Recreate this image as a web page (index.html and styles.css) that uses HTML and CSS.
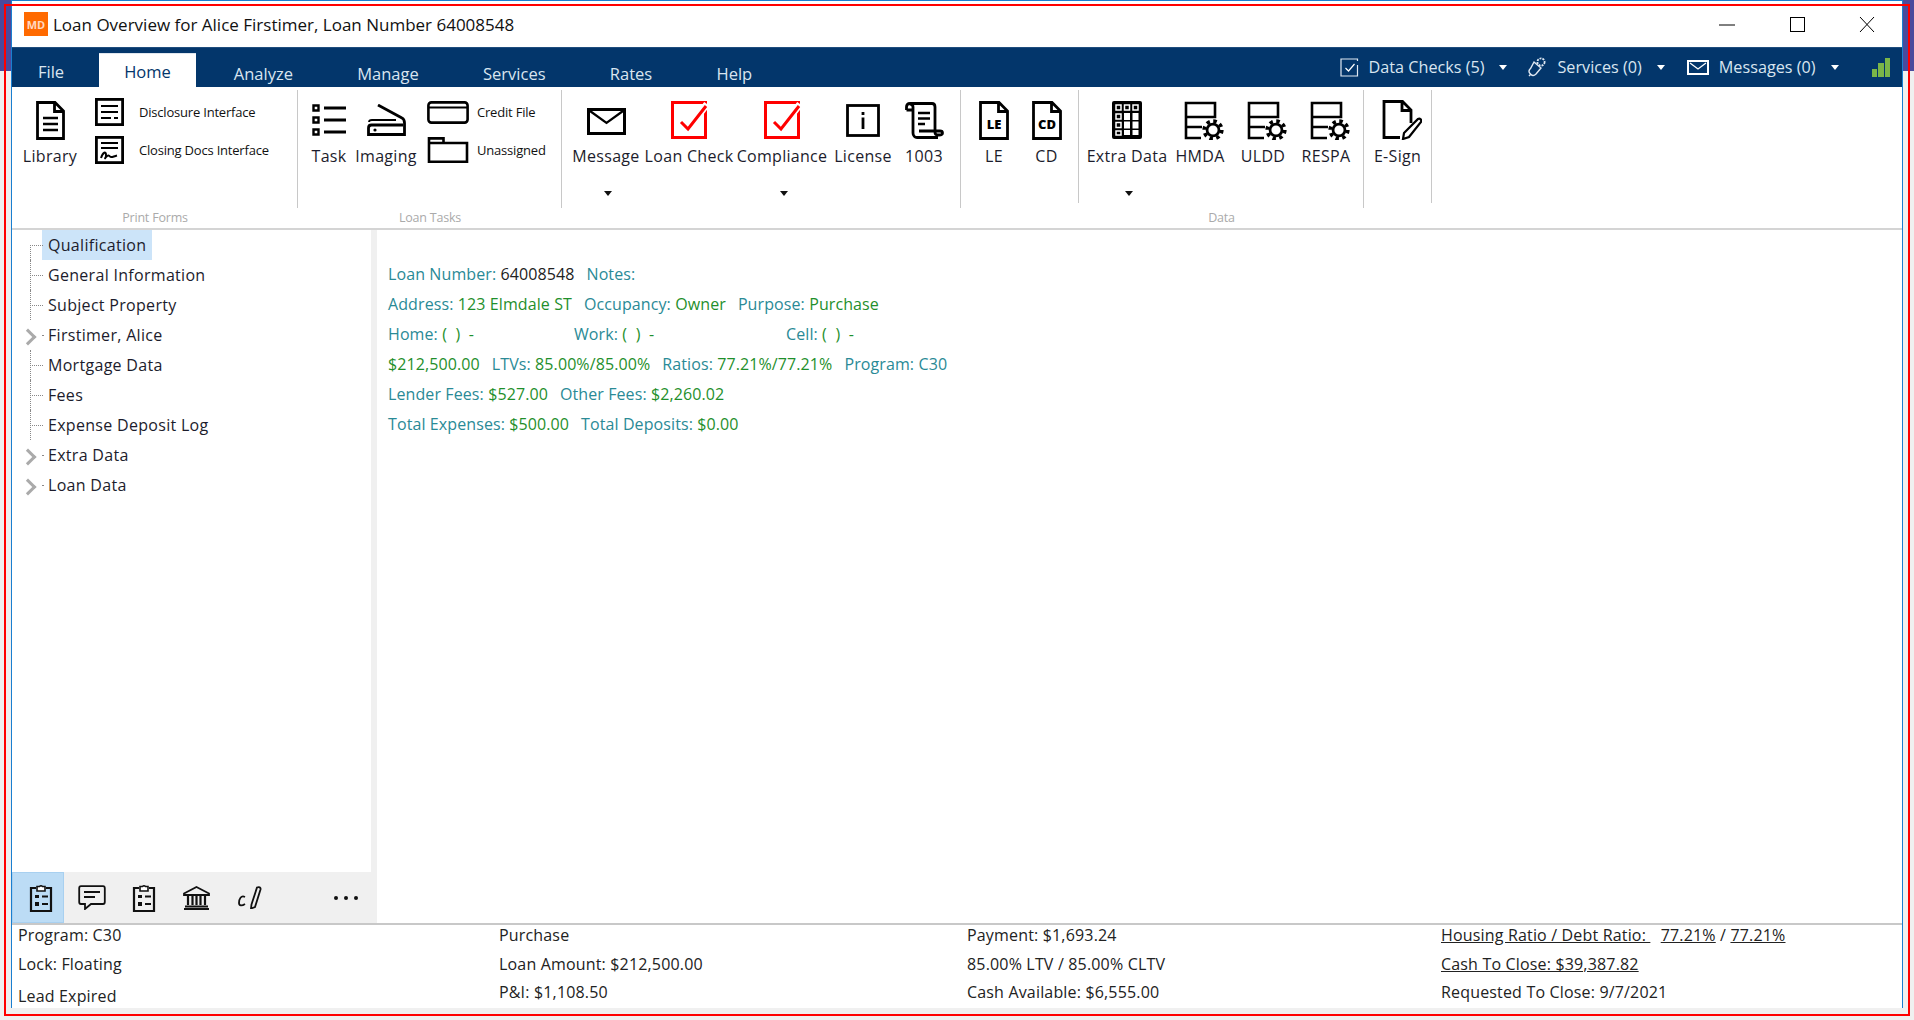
FILE: index.html
```html
<!DOCTYPE html>
<html lang="en">
<head>
  <meta charset="UTF-8">
  <title>Loan Overview</title>
  <link rel="stylesheet" href="styles.css">
</head>
<body>
  <svg class="defs" width="0" height="0">
    <symbol id="gear" viewBox="0 0 24 24">
      <circle cx="12" cy="12" r="6.5" fill="#fff" stroke="#000" stroke-width="3"/>
      <circle cx="12" cy="12" r="9.6" fill="none" stroke="#000" stroke-width="4" stroke-dasharray="3.8 3.74"/>
    </symbol>
    <symbol id="form-gear" viewBox="0 0 47 39">
      <path d="M9 2H38V16H9ZM9 16V37H24M9 26H25" fill="none" stroke="#000" stroke-width="2.6"/>
      <use href="#gear" x="25" y="18" width="22" height="22"/>
    </symbol>
    <symbol id="red-check" viewBox="0 0 37 38">
      <rect x="1.5" y="1.5" width="33" height="35" fill="none" stroke="#f00" stroke-width="3"/>
      <path d="M10 21l7 7L36 3" fill="none" stroke="#fff" stroke-width="7"/>
      <path d="M10 21l7 7L35 5" fill="none" stroke="#f00" stroke-width="3"/>
    </symbol>
    <symbol id="clip" viewBox="0 0 24 28">
      <path d="M7 4H2v23h20V4h-5" fill="none" stroke="#111" stroke-width="2.2"/>
      <path d="M8 5V2.5h2.5a2 2 0 0 1 3 0H16V5v2H8z" fill="#fff" stroke="#111" stroke-width="1.6"/>
      <path d="M6 11h4v3H6zM6 18h4v4H6z" fill="#111"/>
      <path d="M13 12.5h6M13 20h6M6 15.5h0" stroke="#111" stroke-width="1.8"/>
    </symbol>
  </svg>

  <div class="side-strip left"></div>
  <div class="side-strip right"></div>

  <div class="window">
    <header class="titlebar">
      <div class="logo">MD</div>
      <div class="title">Loan Overview for Alice Firstimer, Loan Number 64008548</div>
      <div class="winbtns">
        <svg width="16" height="15" viewBox="0 0 16 15"><path d="M0 8h16" stroke="#000"/></svg>
        <svg width="16" height="15" viewBox="0 0 16 15"><rect x="1.5" y=".5" width="14" height="14" fill="none" stroke="#000"/></svg>
        <svg width="16" height="15" viewBox="0 0 16 15"><path d="M1 0l14 15M15 0L1 15" stroke="#000" fill="none"/></svg>
      </div>
    </header>

    <nav class="tabbar">
      <div class="tab tab-file">File</div>
      <div class="tab tab-active">Home</div>
      <div class="tab">Analyze</div>
      <div class="tab">Manage</div>
      <div class="tab">Services</div>
      <div class="tab">Rates</div>
      <div class="tab">Help</div>
      <div class="tools">
        <div class="tool tool-checks">
          <svg width="19" height="19" viewBox="0 0 19 19"><path d="M17.5 7v11H1V1h16.5v2" fill="none" stroke="#dfe8f2" stroke-width="1.2"/><path d="M5.5 10l3 3 6-7" fill="none" stroke="#fff" stroke-width="1.2"/></svg>
          <span class="tool-text">Data Checks (5)</span><i class="caret caret-w"></i>
        </div>
        <div class="tool">
          <svg width="21" height="21" viewBox="0 0 21 21"><path d="M8 5l7 6-5 6c-2 2-4 1.500-5 .5l-1-1c-1-1-1.500-3 .5-5z" fill="none" stroke="#dfe8f2" stroke-width="1.4"/><path d="M3 19l2-2" stroke="#dfe8f2" stroke-width="1.400"/><circle cx="15" cy="5" r="3.600" fill="none" stroke="#dfe8f2" stroke-width="1.800" stroke-dasharray="2 1"/></svg>
          <span class="tool-text">Services (0)</span><i class="caret caret-w"></i>
        </div>
        <div class="tool">
          <svg width="22" height="15" viewBox="0 0 22 15"><rect x="1" y="1" width="20" height="13" fill="none" stroke="#fff" stroke-width="2"/><path d="M3 3l8 6 8-6" fill="none" stroke="#fff" stroke-width="1.300"/></svg>
          <span class="tool-text">Messages (0)</span><i class="caret caret-w"></i>
        </div>
        <div class="signal"><i class="bar1"></i><i class="bar2"></i><i class="bar3"></i></div>
      </div>
    </nav>

    <section class="ribbon">
      <div class="group g1">
        <div class="group-body">
          <div class="rb">
            <div class="rb-icon"><svg width="29" height="39" viewBox="0 0 29 39"><path d="M1.500 1.500H19L27.500 10V37.500H1.500ZM18.500 2v8.500H27" fill="none" stroke="#000" stroke-width="2.800"/><path d="M7 17h15M7 23h15M7 29h15" stroke="#000" stroke-width="2.600"/></svg></div>
            <div class="rb-label">Library</div>
          </div>
          <div class="small-col col-print">
            <div class="small-btn">
              <svg width="29" height="28" viewBox="0 0 29 28"><rect x="1.400" y="1.400" width="26.200" height="25.200" fill="none" stroke="#000" stroke-width="2.800"/><path d="M6 8h17M6 14h17M6 20h10M19 20h4" stroke="#000" stroke-width="2"/></svg>
              <span>Disclosure Interface</span>
            </div>
            <div class="small-btn">
              <svg width="29" height="28" viewBox="0 0 29 28"><rect x="1.400" y="1.400" width="26.200" height="25.200" fill="none" stroke="#000" stroke-width="2.800"/><path d="M6 7h17M6 12h17" stroke="#000" stroke-width="2.200"/><path d="M6 22c2-6 5-7 5-3s-2 4 0 2 3-2 4-.500 3 0 7-1" fill="none" stroke="#000" stroke-width="2"/></svg>
              <span>Closing Docs Interface</span>
            </div>
          </div>
        </div>
        <div class="group-label">Print Forms</div>
      </div>

      <div class="group g2">
        <div class="group-body">
          <div class="rb">
            <div class="rb-icon"><svg width="34" height="32" viewBox="0 0 34 32"><path d="M1.500 1.500h5v5h-5zM1.500 13.500h5v5h-5zM1.500 25.500h5v5h-5z" fill="none" stroke="#000" stroke-width="2.400"/><path d="M12 4h22M12 16h22M12 28h22" stroke="#000" stroke-width="2.800"/></svg></div>
            <div class="rb-label">Task</div>
          </div>
          <div class="rb">
            <div class="rb-icon"><svg width="39" height="32" viewBox="0 0 39 32"><path d="M11 1l24 13c2 1 2.500 3 2.500 5v11.500H1.500V24c0-2 1-3 3-3H36M1.500 21" fill="none" stroke="#000" stroke-width="2.800"/><path d="M2 18c0-1 1-2 3-2h24" fill="none" stroke="#000" stroke-width="1.800"/><circle cx="8" cy="26" r="1.600"/></svg></div>
            <div class="rb-label">Imaging</div>
          </div>
          <div class="small-col col-tasks">
            <div class="small-btn">
              <svg width="42" height="23" viewBox="0 0 42 23"><rect x="1.400" y="1.400" width="39.200" height="20.200" rx="3" fill="none" stroke="#000" stroke-width="2.600"/><path d="M1 6.500h40" stroke="#000" stroke-width="1.800"/></svg>
              <span>Credit File</span>
            </div>
            <div class="small-btn">
              <svg width="42" height="26" viewBox="0 0 42 26"><path d="M2 1.400h14.500V6H40V24.800H2ZM2 6h14" fill="none" stroke="#000" stroke-width="2.600"/></svg>
              <span>Unassigned</span>
            </div>
          </div>
        </div>
        <div class="group-label">Loan Tasks</div>
      </div>

      <div class="group g3">
        <div class="group-body">
          <div class="rb">
            <div class="rb-icon icon-low"><svg width="39" height="27" viewBox="0 0 39 27"><rect x="1.500" y="1.500" width="36" height="24" fill="none" stroke="#000" stroke-width="3"/><path d="M3 3l16.500 12L36 3" fill="none" stroke="#000" stroke-width="2.200"/></svg></div>
            <div class="rb-label">Message</div>
            <i class="caret"></i>
          </div>
          <div class="rb">
            <div class="rb-icon"><svg width="37" height="38"><use href="#red-check"/></svg></div>
            <div class="rb-label">Loan Check</div>
          </div>
          <div class="rb">
            <div class="rb-icon"><svg width="37" height="38"><use href="#red-check"/></svg></div>
            <div class="rb-label">Compliance</div>
            <i class="caret"></i>
          </div>
          <div class="rb">
            <div class="rb-icon"><svg width="34" height="33" viewBox="0 0 34 33"><rect x="1.500" y="1.500" width="31" height="30" fill="none" stroke="#000" stroke-width="2.800"/><path d="M17 8v3M17 13.500V25" stroke="#000" stroke-width="2.800"/></svg></div>
            <div class="rb-label">License</div>
          </div>
          <div class="rb">
            <div class="rb-icon"><svg width="39" height="37" viewBox="0 0 39 37"><path d="M1.500 8V5c0-2 1-3.500 3.500-3.500h22c2 0 3 1.500 3 3.500v25c0 2 1 3 2.500 3H34c2 0 3.500-.500 3.500-2s-1-2-2.500-2H14M1.500 8H8V5M5 2c2 0 3 1 3 3V31c0 3 2 4.500 4 4.500H33" fill="none" stroke="#000" stroke-width="2.800"/><path d="M13 11h12M13 16.500h12M13 22h7" stroke="#000" stroke-width="2.400"/></svg></div>
            <div class="rb-label">1003</div>
          </div>
        </div>
        <div class="group-label"></div>
      </div>

      <div class="group g4">
        <div class="group-body short">
          <div class="rb">
            <div class="rb-icon"><svg width="30" height="39" viewBox="0 0 30 39"><path d="M1.500 1.500H20L28.500 10V37.500H1.500ZM19.500 2v8.500H28" fill="none" stroke="#000" stroke-width="2.800"/><text x="15" y="28" class="doc-text">LE</text></svg></div>
            <div class="rb-label">LE</div>
          </div>
          <div class="rb">
            <div class="rb-icon"><svg width="30" height="39" viewBox="0 0 30 39"><path d="M1.500 1.500H20L28.500 10V37.500H1.500ZM19.500 2v8.500H28" fill="none" stroke="#000" stroke-width="2.800"/><text x="15" y="28" class="doc-text">CD</text></svg></div>
            <div class="rb-label">CD</div>
          </div>
        </div>
      </div>

      <div class="group g5">
        <div class="group-body">
          <div class="rb">
            <div class="rb-icon"><svg width="30" height="38" viewBox="0 0 30 38"><rect width="30" height="38" rx="2"/><path d="M4 4h5v5H4zM12.500 4h5v5h-5zM21 4h5v5h-5zM4 13h5v5H4zM4 21.500h5v5H4zM4 30h5v4H4z" fill="none" stroke="#fff" stroke-width="1.500"/><path d="M12 12h6v7h-6zM20.500 12h6v7h-6zM12 20.500h6v7h-6zM20.500 20.500h6v7h-6zM12 29h6v5h-6zM20.500 29h6v5h-6z" fill="#fff"/></svg></div>
            <div class="rb-label">Extra Data</div>
            <i class="caret"></i>
          </div>
          <div class="rb">
            <div class="rb-icon"><svg width="47" height="39" class="svg-over"><use href="#form-gear"/></svg></div>
            <div class="rb-label">HMDA</div>
          </div>
          <div class="rb">
            <div class="rb-icon"><svg width="47" height="39" class="svg-over"><use href="#form-gear"/></svg></div>
            <div class="rb-label">ULDD</div>
          </div>
          <div class="rb">
            <div class="rb-icon"><svg width="47" height="39" class="svg-over"><use href="#form-gear"/></svg></div>
            <div class="rb-label">RESPA</div>
          </div>
        </div>
        <div class="group-label">Data</div>
      </div>

      <div class="group g6">
        <div class="group-body short">
          <div class="rb">
            <div class="rb-icon icon-right"><svg width="40" height="40" viewBox="0 0 40 40"><path d="M29 23V10L20.500 1.500H2v36h16M20 2v8.500h9" fill="none" stroke="#000" stroke-width="2.800"/><path d="M36 19c2-1 4 1 3 3L27 37l-6 2 1-6z" fill="none" stroke="#000" stroke-width="2.200"/></svg></div>
            <div class="rb-label">E-Sign</div>
          </div>
        </div>
      </div>
    </section>

    <main class="main">
      <aside class="sidebar">
        <ul class="tree">
          <li class="node first"><span class="branch"></span><span class="node-text selected">Qualification</span></li>
          <li class="node"><span class="branch"></span><span class="node-text">General Information</span></li>
          <li class="node"><span class="branch"></span><span class="node-text">Subject Property</span></li>
          <li class="node"><span class="chev"></span><span class="node-text">Firstimer, Alice</span></li>
          <li class="node"><span class="branch"></span><span class="node-text">Mortgage Data</span></li>
          <li class="node"><span class="branch"></span><span class="node-text">Fees</span></li>
          <li class="node"><span class="branch"></span><span class="node-text">Expense Deposit Log</span></li>
          <li class="node"><span class="chev"></span><span class="node-text">Extra Data</span></li>
          <li class="node"><span class="chev"></span><span class="node-text">Loan Data</span></li>
        </ul>
        <div class="iconbar">
          <div class="ib active"><svg width="24" height="28"><use href="#clip"/></svg></div>
          <div class="ib ib-chat">
            <svg width="28" height="25" viewBox="0 0 28 25"><path d="M3 1.200h22c1 0 1.800 1 1.800 2V17c0 1-.800 2-1.800 2H13l-6 5v-5H3c-1 0-1.800-1-1.800-2V3.200c0-1 .800-2 1.800-2z" fill="none" stroke="#111" stroke-width="1.800"/><path d="M6 7h16M6 12h11" stroke="#111" stroke-width="1.800"/></svg>
          </div>
          <div class="ib"><svg width="24" height="28"><use href="#clip"/></svg></div>
          <div class="ib">
            <svg width="27" height="24" viewBox="0 0 27 24"><path d="M13.500 1L26 7.500V9H1V7.500z" fill="none" stroke="#111" stroke-width="1.800"/><path d="M5 10v9M9.500 10v9M13.500 10v9M17.500 10v9M22 10v9" stroke="#111" stroke-width="2.200"/><path d="M2 20.500h23M1 23h25" stroke="#111" stroke-width="1.800"/></svg>
          </div>
          <div class="ib ib-sign">
            <svg width="25" height="23" viewBox="0 0 25 23"><path d="M7 11C3 9 1 13 1 17c0 3 3 3 6 1" fill="none" stroke="#111" stroke-width="1.800"/><path d="M19 1.500c2-1 4 0 3.500 2L17 21l-4 1.500.500-4z" fill="none" stroke="#111" stroke-width="1.800"/></svg>
          </div>
          <div class="more"><i></i><i></i><i></i></div>
        </div>
      </aside>

      <div class="overview">
        <div class="ov-line"><span class="lb">Loan Number:</span> <span class="num">64008548</span><span class="lb pair">Notes:</span></div>
        <div class="ov-line"><span class="lb">Address:</span> <span class="val">123 Elmdale ST</span><span class="lb pair">Occupancy:</span> <span class="val">Owner</span><span class="lb pair">Purpose:</span> <span class="val">Purchase</span></div>
        <div class="ov-line"><span class="phone ph-home"><span class="lb">Home:</span> <span class="val">(&nbsp; )&nbsp; -</span></span><span class="phone ph-work"><span class="lb">Work:</span> <span class="val">(&nbsp; )&nbsp; -</span></span><span class="phone"><span class="lb">Cell:</span> <span class="val">(&nbsp; )&nbsp; -</span></span></div>
        <div class="ov-line"><span class="val">$212,500.00</span><span class="lb pair">LTVs:</span> <span class="val">85.00%/85.00%</span><span class="lb pair">Ratios:</span> <span class="val">77.21%/77.21%</span><span class="lb pair">Program:</span> <span class="lb">C30</span></div>
        <div class="ov-line"><span class="lb">Lender Fees:</span> <span class="val">$527.00</span><span class="lb pair">Other Fees:</span> <span class="val">$2,260.02</span></div>
        <div class="ov-line"><span class="lb">Total Expenses:</span> <span class="val">$500.00</span><span class="lb pair">Total Deposits:</span> <span class="val">$0.00</span></div>
      </div>
    </main>

    <footer class="status">
      <div class="st-col">
        <div>Program: C30</div>
        <div>Lock: Floating</div>
        <div class="st-low">Lead Expired</div>
      </div>
      <div class="st-col">
        <div>Purchase</div>
        <div>Loan Amount: $212,500.00</div>
        <div>P&amp;I: $1,108.50</div>
      </div>
      <div class="st-col">
        <div>Payment: $1,693.24</div>
        <div>85.00% LTV / 85.00% CLTV</div>
        <div>Cash Available: $6,555.00</div>
      </div>
      <div class="st-col">
        <div><u>Housing Ratio / Debt Ratio:&nbsp;</u> <u class="ratio-first">77.21%</u> / <u>77.21%</u></div>
        <div><u>Cash To Close: $39,387.82</u></div>
        <div>Requested To Close: 9/7/2021</div>
      </div>
    </footer>
  </div>

  <div class="red-frame"></div>
</body>
</html>
```

FILE: styles.css
```css
* {
  box-sizing: border-box;
}
html, body {
  margin: 0;
  height: 1020px;
  overflow: hidden;
}
body {
  position: relative;
  background: #f0f0f0;
  font-family: "Open Sans", "Noto Sans", sans-serif;
  font-size: 16px;
  color: #222;
}
.defs {
  position: absolute;
}
.side-strip {
  position: absolute;
  top: 0;
  width: 11px;
  height: 71px;
  background: #4a4a9c;
}
.side-strip.left {
  left: 0;
}
.side-strip.right {
  right: 0;
}
.red-frame {
  position: absolute;
  left: 4px;
  top: 4px;
  width: 1906px;
  height: 1012px;
  border: 2px solid #f00;
  pointer-events: none;
}

.window {
  display: flex;
  flex-direction: column;
  width: 1892px;
  height: 1008px;
  margin-left: 11px;
  border: 1px solid #1a7fd0;
  border-bottom: 0;
  background: #fff;
}

/* title bar */
.titlebar {
  display: flex;
  align-items: center;
  height: 46px;
  padding-left: 12px;
  flex-shrink: 0;
}
.logo {
  display: flex;
  align-items: center;
  justify-content: center;
  width: 24px;
  height: 24px;
  background: #ff6a00;
  color: #ffd9c0;
  font-size: 11px;
  font-weight: 700;
}
.title {
  margin-left: 5px;
  font-size: 17px;
  color: #111;
}
.winbtns {
  display: flex;
  gap: 54px;
  margin-left: auto;
  margin-right: 27px;
}

/* tabs */
.tabbar {
  display: flex;
  height: 40px;
  flex-shrink: 0;
  background: #03366b;
  color: #d9e5f0;
  border-top: 1px solid #1f4d7d;
}
.tab {
  display: flex;
  align-items: center;
  height: 40px;
  margin-top: 5px;
  padding: 0 26px;
  margin-right: 12.300px;
  font-size: 16.500px;
}
.tab-file {
  margin-top: 3px;
  margin-right: 9px;
  height: 40px;
}
.tab-active {
  height: 35px;
  padding: 1px 25px 0;
  margin-right: 12px;
  background: #fff;
  color: #03366b;
  border-top: 1px solid #dfe6ee;
}
.tools {
  display: flex;
  align-items: center;
  height: 38px;
  margin-left: auto;
  padding-right: 12px;
}
.tool {
  display: flex;
  align-items: center;
  margin-right: 22px;
}
.tool-checks {
  margin-right: 19px;
}
.tool-text {
  margin-left: 10px;
  font-size: 16.200px;
}
.signal {
  display: flex;
  align-items: flex-end;
  gap: 1px;
  height: 19px;
  margin-left: 11px;
}
.signal i {
  display: block;
  width: 5.500px;
  background: #7ab648;
}
.signal .bar1 {
  height: 8px;
}
.signal .bar2 {
  height: 14px;
}
.signal .bar3 {
  height: 19px;
}
.caret {
  display: block;
  width: 0;
  height: 0;
  border-left: 4px solid transparent;
  border-right: 4px solid transparent;
  border-top: 5px solid #111;
}
.caret-w {
  margin-left: 15px;
  border-top-color: #fff;
}

/* ribbon */
.ribbon {
  display: flex;
  height: 143px;
  flex-shrink: 0;
  padding-top: 3px;
  border-bottom: 2px solid #d4d4d4;
}
.group {
  display: flex;
  flex-direction: column;
}
.group-body {
  display: grid;
  height: 118px;
  border-right: 1px solid #c8c8c8;
  align-items: start;
  justify-items: center;
}
.group-body.short {
  height: 113px;
}
.group-label {
  height: 20px;
  line-height: 20px;
  text-align: center;
  font-size: 12.500px;
  letter-spacing: -.2px;
  color: #aaa;
}
.g1 {
  width: 286px;
}
.g1 .group-body {
  grid-template-columns: 76px 1fr;
}
.g2 {
  width: 264px;
}
.g2 .group-body {
  grid-template-columns: 62px 52px 1fr;
}
.g3 {
  width: 399px;
}
.g3 .group-body {
  padding-left: 2px;
  grid-template-columns: 84px 82px 104px 58px 64px;
}
.g4 {
  width: 118px;
}
.g4 .group-body {
  grid-template-columns: 66px 39px;
}
.g5 {
  width: 285px;
}
.g5 .group-body {
  grid-template-columns: 96px 50px 76px 50px;
}
.g6 {
  width: 68px;
}
.g6 .group-body {
  grid-template-columns: 67px;
}
.rb {
  display: flex;
  flex-direction: column;
  align-items: center;
  width: 100%;
}
.rb-icon {
  display: flex;
  align-items: center;
  justify-content: center;
  height: 60px;
}
.icon-low {
  padding-top: 2px;
}
.icon-right {
  padding-left: 8px;
}
.svg-over {
  flex-shrink: 0;
}
.rb-label {
  height: 16px;
  margin-top: -2px;
  line-height: 16px;
  font-size: 16px;
  letter-spacing: .3px;
  white-space: nowrap;
  color: #1c1c2c;
}
.rb .caret {
  margin-top: 27px;
  margin-left: 4px;
}
.small-col {
  display: flex;
  flex-direction: column;
  gap: 10px;
  padding-top: 8px;
  justify-self: start;
}
.col-print {
  margin-left: 7px;
}
.col-tasks {
  margin-left: 15px;
}
.small-btn {
  display: flex;
  align-items: center;
  height: 28px;
  font-size: 13px;
  letter-spacing: -.2px;
  white-space: nowrap;
  color: #111;
}
.col-print .small-btn {
  gap: 15px;
}
.col-tasks .small-btn {
  gap: 8px;
}
.doc-text {
  font-size: 13px;
  font-weight: 800;
  text-anchor: middle;
}

/* main area */
.main {
  display: flex;
  flex: 1;
  min-height: 0;
}
.sidebar {
  display: flex;
  flex-direction: column;
  width: 365px;
  background: #f0f0f0;
}
.tree {
  flex: 1;
  margin: 0 6px 0 0;
  padding: 0 0 0 18px;
  list-style: none;
  background: #fff;
}
.node {
  display: flex;
  align-items: center;
  height: 30px;
}
.branch {
  position: relative;
  width: 12px;
  height: 30px;
  margin-right: 6px;
  border-left: 1px dotted #888;
}
.branch::after {
  content: "";
  position: absolute;
  left: 1px;
  top: 15px;
  width: 11px;
  border-top: 1px dotted #888;
}
.first .branch {
  height: 15px;
  margin-top: 15px;
}
.first .branch::after {
  top: 0;
}
.chev {
  position: relative;
  width: 18px;
  height: 30px;
}
.chev::before {
  content: "";
  position: absolute;
  left: -8px;
  top: 11px;
  width: 9px;
  height: 9px;
  border-top: 3px solid #aaa;
  border-right: 3px solid #aaa;
  transform: rotate(45deg);
}
.chev::after {
  content: "";
  position: absolute;
  left: 12px;
  top: 15px;
  width: 2px;
  height: 1px;
  background: #888;
}
.node-text {
  font-size: 16px;
  letter-spacing: .3px;
  color: #1c1c2c;
  white-space: nowrap;
}
.selected {
  height: 30px;
  line-height: 30px;
  margin-left: -6px;
  padding: 0 6px;
  background: #cce4f9;
}
.iconbar {
  display: flex;
  align-items: center;
  height: 51px;
  background: #f0f0f0;
}
.ib {
  display: flex;
  align-items: center;
  justify-content: center;
  width: 52px;
  height: 51px;
}
.ib.active {
  padding-left: 6px;
  background: #bcdcf5;
  border: 1px solid #a8d0f0;
}
.ib-chat {
  margin-left: 2px;
}
.ib-sign {
  margin-left: 2px;
}
.more {
  display: flex;
  gap: 6px;
  margin-left: auto;
  margin-right: 19px;
}
.more i {
  display: block;
  width: 4px;
  height: 4px;
  border-radius: 50%;
  background: #111;
}

/* overview text */
.overview {
  flex: 1;
  padding: 29px 0 0 11px;
  letter-spacing: .1px;
}
.ov-line {
  height: 30px;
  line-height: 30px;
  white-space: pre;
}
.lb {
  color: #2a8a96;
}
.val {
  color: #1f8f2c;
}
.num {
  color: #222;
}
.pair {
  margin-left: 12px;
}
.phone {
  display: inline-block;
}
.ph-home {
  width: 186px;
}
.ph-work {
  width: 212px;
}

/* status bar */
.status {
  display: grid;
  grid-template-columns: 481px 468px 474px 1fr;
  height: 85px;
  flex-shrink: 0;
  padding: 0 0 0 6px;
  border-top: 2px solid #c8c8c8;
  letter-spacing: .17px;
  color: #222;
}
.st-col {
  display: flex;
  flex-direction: column;
  gap: 8.500px;
}
.st-col div {
  height: 20px;
  line-height: 20px;
  white-space: pre;
}
.st-low {
  margin-top: 4px;
}
.ratio-first {
  margin-left: 6px;
}
```
